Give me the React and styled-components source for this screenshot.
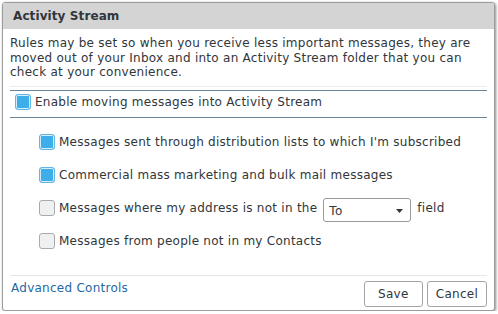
import React from "react"
import styled, { createGlobalStyle } from "styled-components"

const GlobalStyle = createGlobalStyle`
  html, body {
    margin: 0;
    padding: 0;
    background: #ffffff;
    font-family: "DejaVu Sans", "Liberation Sans", sans-serif;
    color: #31363b;
  }
`

const rules = [
  { label: "Messages sent through distribution lists to which I'm subscribed", checked: true },
  { label: "Commercial mass marketing and bulk mail messages", checked: true },
  { label: "Messages where my address is not in the", checked: false, field: true },
  { label: "Messages from people not in my Contacts", checked: false },
]

function Checkbox({ checked }) {
  return <Box $checked={checked} />
}

function ActivityStream() {
  return (
    <Dialog>
      <TitleBar>Activity Stream</TitleBar>
      <Body>
        <Intro>
          Rules may be set so when you receive less important messages, they are
          moved out of your Inbox and into an Activity Stream folder that you can
          check at your convenience.
        </Intro>
        <Divider />
        <EnableRow>
          <Checkbox checked />
          <span>Enable moving messages into Activity Stream</span>
        </EnableRow>
        <RuleList>
          {rules.map(rule => (
            <RuleRow key={rule.label}>
              <Checkbox checked={rule.checked} />
              <span>{rule.label}</span>
              {rule.field && (
                <>
                  <SelectBox>
                    <span>To</span>
                    <svg width="7" height="4" viewBox="0 0 7 4">
                      <path d="M0 0 L7 0 L3.5 4 Z" fill="#31363b" />
                    </svg>
                  </SelectBox>
                  <span>field</span>
                </>
              )}
            </RuleRow>
          ))}
        </RuleList>
      </Body>
      <Footer>
        <Link href="#">Advanced Controls</Link>
        <Buttons>
          <Button>Save</Button>
          <Button>Cancel</Button>
        </Buttons>
      </Footer>
    </Dialog>
  )
}

export default function App() {
  return (
    <>
      <GlobalStyle />
      <ActivityStream />
    </>
  )
}

const Dialog = styled.div`
  box-sizing: border-box;
  margin: 2px 0 0 2px;
  width: 493px;
  height: 309px;
  border: 1px solid #9c9c9c;
  border-radius: 3px;
  background: #ffffff;
  box-shadow: 1px 1px 3px rgba(0, 0, 0, 0.45);
  display: flex;
  flex-direction: column;
  overflow: hidden;
  font-size: 12px;
  letter-spacing: 0.26px;
`

const TitleBar = styled.div`
  height: 26px;
  line-height: 27px;
  padding-left: 10px;
  background: #d4d4d4;
  font-weight: bold;
  font-size: 12px;
  letter-spacing: 0.1px;
  color: #31363b;
`

const Body = styled.div`
  flex: 1;
  padding: 0 7px;
`

const Intro = styled.p`
  margin: 7px 0 0;
  line-height: 14.5px;
`

const Divider = styled.div`
  margin-top: 6px;
  height: 3px;
  border-top: 1px solid #e8eef2;
  border-bottom: 1px solid #6b8698;
`

const EnableRow = styled.label`
  display: flex;
  align-items: center;
  gap: 4px;
  height: 16px;
  padding: 3px 0 7px 5px;
  border-bottom: 1px solid #6b8698;
`

const RuleList = styled.div`
  display: flex;
  flex-direction: column;
  gap: 11px;
  padding: 13px 0 0 29px;
`

const RuleRow = styled.label`
  display: flex;
  align-items: center;
  gap: 4px;
  height: 22px;
`

const Box = styled.span`
  box-sizing: border-box;
  width: 16px;
  height: 16px;
  flex: none;
  border-radius: 3px;
  border: 1px solid ${p => (p.$checked ? "#62b6e6" : "#a9aaab")};
  background: ${p => (p.$checked ? "#3daee9" : "#eff0f1")};
  box-shadow: ${p => (p.$checked ? "inset 0 0 0 1px #d6ecf8" : "none")};
`

const SelectBox = styled.div`
  box-sizing: border-box;
  display: flex;
  align-items: center;
  justify-content: space-between;
  width: 88px;
  height: 24px;
  margin: 4px 2px 0 2px;
  padding: 3px 7px 0 5px;
  border: 1px solid #9a9a9a;
  border-radius: 3px;
  background: #ffffff;
`

const Footer = styled.div`
  margin: 0 7px;
  padding: 5px 0 3px;
  border-top: 1px solid #e6e6e6;
  display: flex;
  align-items: center;
  justify-content: space-between;
`

const Link = styled.a`
  padding-left: 1px;
  color: #1f67a3;
  text-decoration: none;
  margin-top: -12px;
`

const Buttons = styled.div`
  display: flex;
  gap: 4px;
`

const Button = styled.button`
  box-sizing: border-box;
  height: 26px;
  min-width: 59px;
  padding: 0 8px;
  border: 1px solid #a3a3a3;
  border-radius: 3px;
  background: #ffffff;
  font-family: inherit;
  font-size: 12px;
  letter-spacing: 0.26px;
  color: #31363b;
`
